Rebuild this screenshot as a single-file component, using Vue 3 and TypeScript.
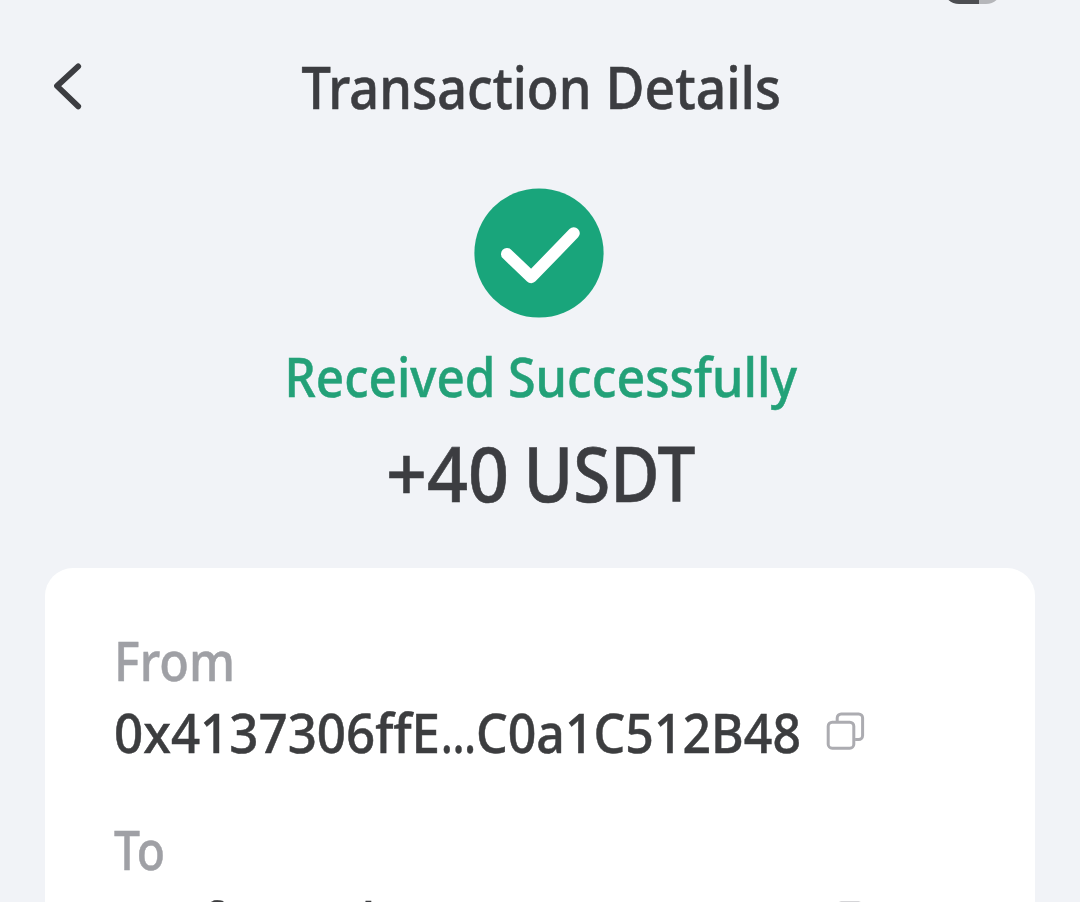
<script setup lang="ts">
interface Segment {
  text: string
  x: number
  width: number
}

interface Party {
  label: string
  labelX: number
  labelWidth: number
  segments: Segment[]
}

const title: Segment[] = [
  { text: 'Transaction', x: 3.5, width: 290 },
  { text: 'Details', x: 307.5, width: 175.5 },
]

const status: Segment[] = [
  { text: 'Received', x: 3.5, width: 211 },
  { text: 'Successfully', x: 227, width: 289 },
]

const amount: Segment[] = [
  { text: '+40', x: 5, width: 123 },
  { text: 'USDT', x: 142.5, width: 172 },
]

const parties: Party[] = [
  {
    label: 'From',
    labelX: 1,
    labelWidth: 121,
    segments: [
      { text: '0x4137306ffE', x: 1, width: 326 },
      { text: '...', x: 328, width: 35 },
      { text: 'C0a1C512B48', x: 363, width: 325 },
    ],
  },
  {
    label: 'To',
    labelX: 1,
    labelWidth: 51,
    segments: [
      { text: '0xaf', x: 1, width: 107 },
      { text: 'eaceabae', x: 111, width: 225 },
      { text: '...', x: 336, width: 28 },
      { text: 'C7788110', x: 366, width: 248 },
      { text: 'aea', x: 614, width: 74 },
    ],
  },
]
</script>

<template>
  <main class="screen">
    <div class="battery"></div>

    <header class="bar">
      <svg class="back" width="40" height="60" viewBox="0 0 40 60">
        <path d="M33.2 16.4 12 36 33.2 56.4" />
      </svg>
      <svg class="title" width="490" height="80" viewBox="0 0 490 80">
        <text y="59">
          <tspan v-for="part in title" :key="part.text" :x="part.x" :textLength="part.width" lengthAdjust="spacingAndGlyphs">{{ part.text }}</tspan>
        </text>
      </svg>
    </header>

    <section class="summary">
      <svg class="badge" width="130" height="130" viewBox="0 0 130 130">
        <circle cx="65" cy="65" r="64.6" />
        <path d="M33 66 57.2 89.2 99.8 45.2" />
      </svg>
      <svg class="status" width="520" height="80" viewBox="0 0 520 80">
        <text y="60">
          <tspan v-for="part in status" :key="part.text" :x="part.x" :textLength="part.width" lengthAdjust="spacingAndGlyphs">{{ part.text }}</tspan>
        </text>
      </svg>
      <svg class="amount" width="320" height="100" viewBox="0 0 320 100">
        <text y="80">
          <tspan v-for="part in amount" :key="part.text" :x="part.x" :textLength="part.width" lengthAdjust="spacingAndGlyphs">{{ part.text }}</tspan>
        </text>
      </svg>
    </section>

    <section class="card">
      <article v-for="party in parties" :key="party.label" class="party">
        <svg class="label" width="140" height="70" viewBox="0 0 140 70">
          <text :x="party.labelX" y="51" :textLength="party.labelWidth" lengthAdjust="spacingAndGlyphs">{{ party.label }}</text>
        </svg>
        <div class="line">
          <svg class="address" width="700" height="72" viewBox="0 0 700 72">
            <text y="53">
              <tspan
                v-for="segment in party.segments"
                :key="segment.text"
                :x="segment.x"
                :textLength="segment.width"
                lengthAdjust="spacingAndGlyphs"
              >{{ segment.text }}</tspan>
            </text>
          </svg>
          <svg class="copy" width="40" height="40" viewBox="0 0 40 40">
            <rect x="2.2" y="11.2" width="25.6" height="26" rx="4" />
            <path d="M11.2 10.5V7a4 4 0 0 1 4-4h17.4a4 4 0 0 1 4 4v17.6a4 4 0 0 1-4 4h-3.5" />
          </svg>
        </div>
      </article>
    </section>
  </main>
</template>

<style>
html,
body {
  margin: 0;
  overflow: hidden;
}
</style>

<style scoped>
.screen {
  position: relative;
  display: flex;
  flex-direction: column;
  width: 1080px;
  height: 902px;
  overflow: hidden;
  background: #f1f3f7;
  font-family: 'Noto Sans', 'Open Sans', sans-serif;
  font-weight: 500;
}

svg {
  display: block;
  flex: none;
  overflow: visible;
}

.battery {
  position: absolute;
  top: -28px;
  left: 943px;
  width: 59px;
  height: 32px;
  border-radius: 16px;
  background: linear-gradient(90deg, #4d4e52 36px, #b5b6ba 36px);
}

.bar {
  display: flex;
  flex: none;
  height: 130px;
  padding: 50px 0 0 45px;
  box-sizing: border-box;
}

.back {
  fill: none;
  stroke: #3c3d41;
  stroke-width: 5.8;
  stroke-linecap: round;
  stroke-linejoin: round;
}

.title {
  margin-left: 213px;
  font-size: 58.5px;
  fill: #3c3d41;
  stroke: #3c3d41;
  stroke-width: 0.6;
}

.summary {
  display: flex;
  flex: none;
  flex-direction: column;
  align-items: center;
  height: 438px;
  padding-top: 57.5px;
  box-sizing: border-box;
}

.badge {
  margin-right: 2px;
  fill: #19a57b;
}

.badge path {
  fill: none;
  stroke: #fff;
  stroke-width: 12;
  stroke-linecap: round;
  stroke-linejoin: round;
}

.status {
  margin-top: 19.5px;
  margin-left: 2px;
  font-size: 55px;
  fill: #23a178;
  stroke: #23a178;
  stroke-width: 0.5;
}

.amount {
  margin-top: 5px;
  margin-left: 2px;
  font-size: 76px;
  fill: #3c3d41;
  stroke: #3c3d41;
  stroke-width: 0.6;
}

.card {
  flex: none;
  width: 990px;
  height: 400px;
  margin-left: 45px;
  padding: 62px 0 0 68px;
  box-sizing: border-box;
  border-radius: 28px;
  background: #fff;
}

.party {
  height: 189px;
}

.label {
  font-size: 54.5px;
  fill: #9fa0a5;
  stroke: #9fa0a5;
  stroke-width: 0.5;
}

.line {
  display: flex;
  align-items: flex-start;
}

.address {
  font-size: 54.5px;
  fill: #3c3d3f;
  stroke: #3c3d3f;
  stroke-width: 0.5;
}

.copy {
  margin: 11px 0 0 13px;
  fill: none;
  stroke: #acacb1;
  stroke-width: 3;
}
</style>
